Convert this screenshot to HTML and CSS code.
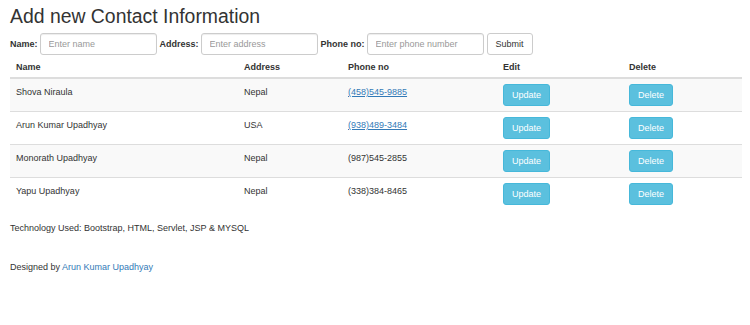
FILE: index.html
```html
<!DOCTYPE html>
<html lang="en">
<head>
    <meta charset="UTF-8">
    <meta name="viewport" content="width=device-width, initial-scale=1.0">
    <title>Contact Information</title>
    <link rel="stylesheet" href="styles.css">
</head>
<body>
    <!-- Form for new contact -->
    <h2 class="page-title">Add new Contact Information</h2>
    <form class="contact-form">
        <label for="name">Name:</label>
        <input type="text" id="name" placeholder="Enter name">
        <label for="address">Address:</label>
        <input type="text" id="address" placeholder="Enter address">
        <label for="phone">Phone no:</label>
        <input type="text" id="phone" placeholder="Enter phone number">
        <button type="button" class="btn btn-default">Submit</button>
    </form>

    <!-- Contact list -->
    <table class="contact-table">
        <thead>
            <tr>
                <th class="col-name">Name</th>
                <th class="col-address">Address</th>
                <th class="col-phone">Phone no</th>
                <th class="col-edit">Edit</th>
                <th class="col-delete">Delete</th>
            </tr>
        </thead>
        <tbody>
            <tr>
                <td>Shova Niraula</td>
                <td>Nepal</td>
                <td><a href="#">(458)545-9885</a></td>
                <td><button class="btn btn-info">Update</button></td>
                <td><button class="btn btn-info">Delete</button></td>
            </tr>
            <tr>
                <td>Arun Kumar Upadhyay</td>
                <td>USA</td>
                <td><a href="#">(938)489-3484</a></td>
                <td><button class="btn btn-info">Update</button></td>
                <td><button class="btn btn-info">Delete</button></td>
            </tr>
            <tr>
                <td>Monorath Upadhyay</td>
                <td>Nepal</td>
                <td>(987)545-2855</td>
                <td><button class="btn btn-info">Update</button></td>
                <td><button class="btn btn-info">Delete</button></td>
            </tr>
            <tr>
                <td>Yapu Upadhyay</td>
                <td>Nepal</td>
                <td>(338)384-8465</td>
                <td><button class="btn btn-info">Update</button></td>
                <td><button class="btn btn-info">Delete</button></td>
            </tr>
        </tbody>
    </table>

    <!-- Footer -->
    <p class="tech">Technology Used: Bootstrap, HTML, Servlet, JSP &amp; MYSQL</p>
    <p class="credits">Designed by <a href="#" class="author">Arun Kumar Upadhyay</a></p>
</body>
</html>
```

FILE: styles.css
```css
/* Base */
body {
    font-family: "Liberation Sans", Arial, sans-serif;
    font-size: 9px;
    line-height: 13px;
    color: #333;
    background-color: #fff;
    margin: 0;
    padding: 0 8px 0 10px;
}

a {
    color: #337ab7;
}

.page-title {
    font-size: 19.4px;
    font-weight: normal;
    line-height: 21px;
    margin: 6px 0 6px 0;
}

/* Form */
.contact-form {
    display: flex;
    align-items: center;
    margin: 0;
}

.contact-form label {
    font-weight: bold;
    margin-right: 2px;
}

.contact-form input {
    width: 117px;
    height: 22px;
    box-sizing: border-box;
    padding: 3px 8px;
    margin-right: 3px;
    font-family: inherit;
    font-size: 9px;
    color: #555;
    border: 1px solid #ccc;
    border-radius: 3px;
    box-shadow: inset 0 1px 1px rgba(0, 0, 0, 0.075);
}

.contact-form input::placeholder {
    color: #999;
}

/* Buttons */
.btn {
    height: 22px;
    box-sizing: border-box;
    padding: 3px 8px;
    font-family: inherit;
    font-size: 9px;
    line-height: 13px;
    border: 1px solid transparent;
    border-radius: 3px;
    cursor: pointer;
}

.btn-default {
    background-color: #fff;
    border-color: #ccc;
    color: #333;
}

.btn-info {
    background-color: #5bc0de;
    border-color: #46b8da;
    color: #fff;
}

/* Table */
.contact-table {
    width: 100%;
    border-collapse: collapse;
    margin-bottom: 12px;
}

.contact-table th,
.contact-table td {
    text-align: left;
    vertical-align: top;
    padding: 5px 6px;
}

.contact-table th {
    border-bottom: 2px solid #ddd;
    padding-top: 6px;
    padding-bottom: 3px;
}

.contact-table td {
    border-top: 1px solid #ddd;
    line-height: 16px;
}

.contact-table tbody tr:first-child td {
    border-top: none;
}

.contact-table tbody tr:nth-child(odd) {
    background-color: #f9f9f9;
}

.col-name { width: 216px; }
.col-address { width: 92px; }
.col-phone { width: 143px; }
.col-edit { width: 114px; }

/* Footer */
.tech {
    margin: 0 0 26px 0;
}

.credits {
    margin: 0;
}

.author {
    text-decoration: none;
}
```
